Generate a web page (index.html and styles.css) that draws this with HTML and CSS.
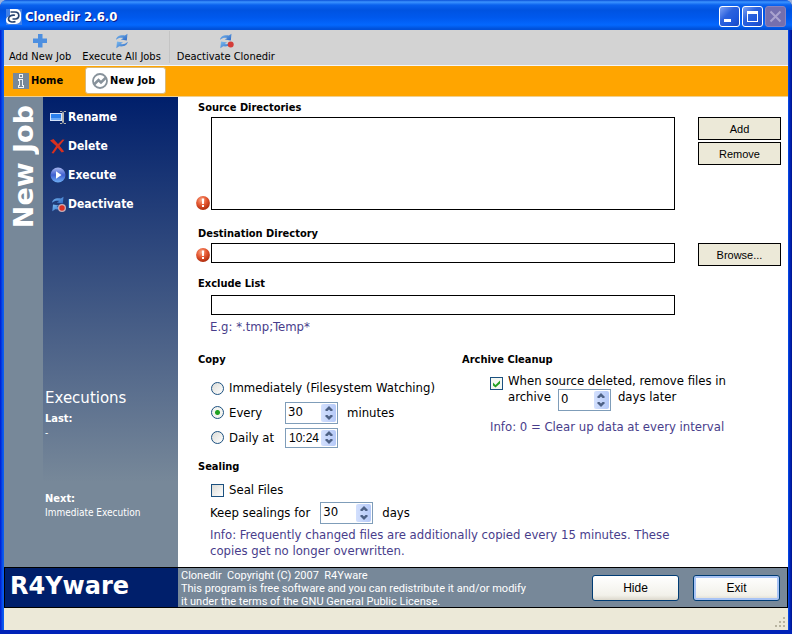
FILE: index.html
```html
<!DOCTYPE html>
<html lang="en">
<head>
<meta charset="utf-8">
<title>Clonedir 2.6.0</title>
<link rel="stylesheet" href="styles.css">
</head>
<body>
<svg class="defs" width="0" height="0" aria-hidden="true">
  <defs>
    <radialGradient id="red" cx="40%" cy="30%" r="70%"><stop offset="0" stop-color="#f8a888"/><stop offset=".5" stop-color="#e65a34"/><stop offset="1" stop-color="#b02c0c"/></radialGradient>
    <linearGradient id="ball" x1="0" y1="0" x2="0" y2="1"><stop offset="0" stop-color="#a9b8f0"/><stop offset=".5" stop-color="#3f5fd0"/><stop offset="1" stop-color="#6fb0f5"/></linearGradient>
    <linearGradient id="arrow" x1="0" y1="0" x2="1" y2="1"><stop offset="0" stop-color="#7dbcf0"/><stop offset="1" stop-color="#2a66c4"/></linearGradient>
    <symbol id="sync" viewBox="0 0 16 16">
      <path fill="url(#arrow)" d="M2 6.800C2.500 3.800 5 1.800 10.800 2.500L13.500.7 12.800 7.500 6.800 6.600 9.300 4.900C6.500 4.400 4.200 4.800 2 6.800z"/>
      <path fill="url(#arrow)" d="M13.800 8.700C13.300 11.700 10.800 13.900 5.200 13.300L2.300 15.200 3 8.500 9 9.400 6.500 11.100C9.300 11.600 11.600 10.700 13.800 8.700z"/>
    </symbol>
    <symbol id="error" viewBox="0 0 14 14">
      <circle cx="7" cy="7" r="6.900" fill="url(#red)"/>
      <path fill="#fff" d="M5.800 2.500h2.400l-.3 5.500H6.100zM6 9h2v2H6z"/>
    </symbol>
    <symbol id="up" viewBox="0 0 8 5"><path fill="#4d6185" d="M4 0l4 4-1 1H5.500L4 3.500 2.500 5H1L0 4z"/></symbol>
    <symbol id="down" viewBox="0 0 8 5"><path fill="#4d6185" d="M4 5l4-4-1-1H5.500L4 1.500 2.500 0H1L0 1z"/></symbol>
  </defs>
</svg>
<div class="window">
  <header class="titlebar">
    <svg class="logo" width="16" height="16" viewBox="0 0 16 16">
      <rect width="16" height="16" fill="#3f7fe8"/>
      <path d="M4 0h6a5 5 0 0 1 5 5v5a5 5 0 0 1-5 5H4a4 4 0 0 1-4-4c0-2 1-3 4-4z" fill="#fff"/>
      <path d="M4.500 3H9c5 0 5 7 .5 7H6.500M9 6.300C6 5.500 2.500 7 2.500 10c0 3 4 3.500 7 2.500" fill="none" stroke="#27436f" stroke-width="1.700"/>
    </svg>
    <h1>Clonedir 2.6.0</h1>
    <div class="wincontrols">
      <button type="button" aria-label="Minimize"><svg width="19" height="19" viewBox="0 0 19 19"><path fill="#fff" d="M4 12h7v3H4z"/></svg></button>
      <button type="button" aria-label="Maximize"><svg width="19" height="19" viewBox="0 0 19 19"><path fill="#fff" fill-rule="evenodd" d="M4 4h11v11H4zM5 7v7h9V7z"/></svg></button>
      <button type="button" class="close" aria-label="Close" disabled><svg width="19" height="19" viewBox="0 0 19 19"><path stroke="#aaa3cf" stroke-width="2" d="M4.500 4.500l10 10M14.500 4.500l-10 10"/></svg></button>
    </div>
  </header>

  <div class="toolbar">
    <button type="button"><svg width="16" height="16" viewBox="0 0 16 16"><path fill="#4d8fe0" d="M6 1h4.500v4.500H15V10h-4.500v4.500H6V10H1V5.500h5z"/></svg>Add New Job</button>
    <button type="button"><svg width="16" height="16"><use href="#sync"/></svg>Execute All Jobs</button>
    <span class="divider"></span>
    <button type="button"><svg width="16" height="16" viewBox="0 0 16 16"><use href="#sync"/><circle cx="12.700" cy="11.500" r="3" fill="#d43c38"/></svg>Deactivate Clonedir</button>
  </div>

  <nav class="tabs">
    <a href="#home"><svg width="16" height="16" viewBox="0 0 16 16"><path fill="#778899" d="M0 0h16v16H0z"/><path fill="#f2f4f6" fill-rule="evenodd" d="M6 1h4v4H6zM7 2v2h2V2zM5 6h5v6h1v3H5v-3h1V8H5zM7 7v6H6v1h4v-1H9V7z"/></svg>Home</a>
    <a href="#job" class="current"><svg width="16" height="16" viewBox="0 0 16 16"><circle cx="8" cy="8" r="7" fill="#fff" stroke="#87929b" stroke-width="1.800"/><path d="M2 11.500L6.500 7l2.500 2.500L14 4.500" fill="none" stroke="#87929b" stroke-width="2.600"/></svg>New Job</a>
  </nav>

  <div class="content">
    <aside class="strip"><h2>New Job</h2></aside>
    <aside class="panel">
      <div class="actions">
        <button type="button"><svg width="16" height="16" viewBox="0 0 16 16"><path fill="#d5e3fa" d="M0 4h12v8H0z"/><path fill="#2a80ee" d="M1 5h10v6H1z"/><path fill="#68a8f8" d="M1 9h10v2H1z"/><path fill="none" stroke="#b4b4ae" d="M10 2.500h2l1 1 1-1h2M10 14.500h2l1-1 1 1h2"/><path stroke="#b4b4ae" stroke-width="2" d="M13 3.500v10"/></svg>Rename</button>
        <button type="button"><svg width="16" height="16" viewBox="0 0 16 16"><path fill="#d8301f" d="M0 2.500L3.500 1 8 6l4.500-4.500 2 .3L9.500 7.800l4.700 5.700-2.500 1L7.700 9.800 3.500 15.500 1.500 15l4.700-7z"/></svg>Delete</button>
        <button type="button"><svg width="16" height="16" viewBox="0 0 16 16"><circle cx="8" cy="8" r="7.500" fill="url(#ball)"/><path fill="#fff" d="M6 4.200L11.500 8 6 11.800z"/></svg>Execute</button>
        <button type="button"><svg width="16" height="16" viewBox="0 0 16 16"><use href="#sync"/><circle cx="12" cy="12" r="4" fill="#c9aeb8"/><circle cx="12" cy="12" r="2.700" fill="#dc3024"/></svg>Deactivate</button>
      </div>
      <div class="executions">
        <h2>Executions</h2>
        <dl>
          <dt>Last:</dt><dd>-</dd>
          <dt>Next:</dt><dd>Immediate Execution</dd>
        </dl>
      </div>
    </aside>

    <main class="form">
      <section class="field">
        <label class="heading" for="source">Source Directories</label>
        <div class="row">
          <svg class="error" width="14" height="14"><use href="#error"/></svg>
          <textarea id="source"></textarea>
          <div class="side"><button type="button">Add</button><button type="button">Remove</button></div>
        </div>
      </section>
      <section class="field destination">
        <label class="heading" for="dest">Destination Directory</label>
        <div class="row">
          <svg class="error" width="14" height="14"><use href="#error"/></svg>
          <input type="text" id="dest">
          <div class="side"><button type="button">Browse...</button></div>
        </div>
      </section>
      <section class="field exclude">
        <label class="heading" for="exclude">Exclude List</label>
        <div class="row"><input type="text" id="exclude"></div>
        <p class="hint">E.g: *.tmp;Temp*</p>
      </section>

      <div class="pair">
        <section class="group">
          <h3 class="heading">Copy</h3>
          <div class="options">
            <div class="option"><input type="radio" name="copy" id="now"><label for="now">Immediately (Filesystem Watching)</label></div>
            <div class="option"><input type="radio" name="copy" id="every" checked><label for="every" class="short">Every</label>
              <span class="spin"><input type="text" value="30" aria-label="Minutes"><span class="arrows"><button type="button" aria-label="Up"><svg width="8" height="5"><use href="#up"/></svg></button><button type="button" aria-label="Down"><svg width="8" height="5"><use href="#down"/></svg></button></span></span>
              <span class="unit">minutes</span></div>
            <div class="option"><input type="radio" name="copy" id="daily"><label for="daily" class="short">Daily at</label>
              <span class="spin time"><input type="text" value="10:24" aria-label="Time"><span class="arrows"><button type="button" aria-label="Up"><svg width="8" height="5"><use href="#up"/></svg></button><button type="button" aria-label="Down"><svg width="8" height="5"><use href="#down"/></svg></button></span></span></div>
          </div>
        </section>
        <section class="group">
          <h3 class="heading">Archive Cleanup</h3>
          <div class="cleanup">
            <input type="checkbox" id="clean" checked>
            <div>
              <label for="clean">When source deleted, remove files in</label>
              <div class="inline"><label for="keep">archive</label>
                <span class="spin"><input type="text" id="keep" value="0"><span class="arrows"><button type="button" aria-label="Up"><svg width="8" height="5"><use href="#up"/></svg></button><button type="button" aria-label="Down"><svg width="8" height="5"><use href="#down"/></svg></button></span></span>
                <span>days later</span></div>
            </div>
          </div>
          <p class="info">Info: 0 = Clear up data at every interval</p>
        </section>
      </div>

      <section class="sealing">
        <h3 class="heading">Sealing</h3>
        <div class="option"><input type="checkbox" id="seal"><label for="seal">Seal Files</label></div>
        <div class="option keep"><label for="sealdays">Keep sealings for</label>
          <span class="spin"><input type="text" id="sealdays" value="30"><span class="arrows"><button type="button" aria-label="Up"><svg width="8" height="5"><use href="#up"/></svg></button><button type="button" aria-label="Down"><svg width="8" height="5"><use href="#down"/></svg></button></span></span>
          <span class="unit">days</span></div>
        <p class="info">Info: Frequently changed files are additionally copied every 15 minutes. These copies get no longer overwritten.</p>
      </section>
    </main>
  </div>

  <footer class="footer">
    <div class="brand">R4Yware</div>
    <p>Clonedir&nbsp; Copyright (C) 2007&nbsp; R4Yware<br>This program is free software and you can redistribute it and/or modify<br>it under the terms of the GNU General Public License.</p>
    <div class="buttons"><button type="button">Hide</button><button type="button" class="default">Exit</button></div>
  </footer>
  <div class="status"><svg width="12" height="12" viewBox="0 0 12 12"><path fill="#b8b4a0" d="M9 1h2v2H9zM9 5h2v2H9zM5 5h2v2H5zM9 9h2v2H9zM5 9h2v2H5zM1 9h2v2H1z"/></svg></div>
</div>
</body>
</html>
```
FILE: styles.css
```css
* { box-sizing: border-box; }
body {
  margin: 0;
  background: #9db3dc;
  font: 13px/16px "DejaVu Sans Condensed", "DejaVu Sans", sans-serif;
  color: #000;
}
h1, h2, h3, p, dl, dd { margin: 0; }
button, input, textarea { font: inherit; color: inherit; margin: 0; padding: 0; }
button { border: 0; background: none; }
svg { display: block; flex: none; }
.defs { position: absolute; }

.window {
  display: flex;
  flex-direction: column;
  min-height: 100vh;
  padding: 0 4px 4px;
  border-radius: 7px 7px 0 0;
  background: linear-gradient(90deg, #0019cf, #0a5cf0 3px, #0a5cf0 calc(100% - 4px), #0030d0 calc(100% - 3px), #00138c);
  box-shadow: inset 0 -4px #0022b8;
}

.titlebar {
  display: flex;
  align-items: center;
  height: 30px;
  margin: 0 -4px;
  padding: 3px 6px 0 6px;
  border-radius: 7px 7px 0 0;
  background: linear-gradient(#0a50d8, #3c94ff 2px, #0a62ee 5px, #0053e1 10px, #0059ee 18px, #0468fe 25px, #0050d8 29px);
}
.titlebar h1 {
  flex: 1;
  margin-left: 3px;
  color: #fff;
  font-size: 13px;
  line-height: 16px;
  text-shadow: 1px 1px #0a1883;
}
.wincontrols { display: flex; gap: 2px; }
.wincontrols button {
  width: 21px;
  height: 21px;
  border: 1px solid #fff;
  border-radius: 3px;
  background: linear-gradient(135deg, #7fa3f5, #2c62dd 40%, #1f58dc 70%, #1b48c0);
}
.wincontrols .close { border-color: #8a83bd; background: #756fae; }

.toolbar {
  display: flex;
  align-items: flex-start;
  height: 36px;
  padding: 3px 0 0 5px;
  border-bottom: 1px solid #f6f6f6;
  background: #d3d3d3;
  font-size: 11px;
  line-height: 14px;
}
.toolbar button {
  display: flex;
  flex-direction: column;
  align-items: center;
  gap: 1px;
  margin-right: 11px;
}
.toolbar .divider { width: 1px; height: 32px; margin: -2px 7px 0 -3px; background: #c4c4c4; }

.tabs {
  display: flex;
  gap: 14px;
  height: 31px;
  padding: 1px 0 2px 1px;
  border-bottom: 1px solid #f0d090;
  background: #ffa500;
  font-size: 11px;
  font-weight: bold;
}
.tabs a {
  display: flex;
  align-items: center;
  gap: 2px;
  padding: 0 8px;
  color: #000;
  text-decoration: none;
}
.tabs .current { padding: 0 10px 0 6px; border: 1px solid #d9b878; border-radius: 3px; background: #fff; }

.content { display: flex; flex: 1; background: #fff; }
.strip { width: 39px; padding-top: 8px; background: #778899; color: #fff; }
.strip h2 {
  width: 39px;
  writing-mode: vertical-rl;
  transform: rotate(180deg);
  font-family: "DejaVu Sans", sans-serif;
  font-size: 27px;
  line-height: 39px;
}
.panel {
  display: flex;
  flex-direction: column;
  justify-content: space-between;
  width: 135px;
  padding: 12px 2px 47px;
  background: linear-gradient(#001f6b, #778899 82%);
  color: #fff;
}
.actions { display: flex; flex-direction: column; align-items: flex-start; gap: 13px; padding-left: 5px; }
.actions button { display: flex; align-items: center; gap: 2px; font-size: 12px; font-weight: bold; }
.executions h2 { margin-bottom: 5px; font-family: "DejaVu Sans", sans-serif; font-size: 15px; font-weight: normal; line-height: 18px; }
.executions dl { font-size: 10px; line-height: 14px; }
.executions dt { font-size: 11px; font-weight: bold; }
.executions dd + dt { margin-top: 52px; }

.form { flex: 1; padding: 3px 7px 8px 18px; }
.heading { display: block; margin: 0; padding-left: 2px; font-size: 11px; font-weight: bold; line-height: 16px; }
.row { display: grid; grid-template-columns: 15px 1fr 106px; margin-top: 1px; }
.row textarea, .row > input { grid-column: 2; border: 1px solid #000; background: #fff; width: 100%; }
.row textarea { display: block; height: 93px; resize: none; }
.row > input { height: 20px; }
.error { align-self: end; }
.destination .error { align-self: center; }
.side { display: flex; flex-direction: column; gap: 2px; padding-left: 23px; }
.side button {
  height: 23px;
  border: 1px solid #000;
  background: #ece9d8;
  font: 11px "Liberation Sans", Arial, sans-serif;
}
.field { margin-bottom: 16px; }
.field + .field { margin-bottom: 10px; }
.field.exclude { margin-bottom: 17px; }
.exclude .row { margin-top: 3px; }
.hint { margin: 4px 0 0 14px; color: #483d8b; }
.info { color: #483d8b; }

.pair { display: grid; grid-template-columns: 264px 1fr; }
.options { display: grid; grid-template-rows: 24px 25px 25px; margin-top: 8px; padding-left: 15px; }
.option { display: flex; align-items: center; }
.option > label:not(:first-child) { margin-left: 5px; }
.option .short { width: 56px; }
.unit { margin-left: 9px; }

input[type="radio"], input[type="checkbox"] {
  appearance: none;
  flex: none;
  width: 13px;
  height: 13px;
  border: 1px solid #1c5180;
  background: linear-gradient(135deg, #dcdcd7, #fff);
}
input[type="radio"] { border-radius: 50%; }
input[type="radio"]:checked { background: radial-gradient(circle, #21a121 2px, #f4f4f0 3px); }
input[type="checkbox"]:checked {
  background: #f4f8f2 url("data:image/svg+xml,%3Csvg xmlns='http://www.w3.org/2000/svg' viewBox='0 0 11 11'%3E%3Cpath d='M2 4.500l2.500 2.500L9 2.500v3L4.500 9.500 2 7.500z' fill='%2321a121'/%3E%3C/svg%3E");
}

.spin { display: flex; flex: none; width: 53px; height: 22px; padding: 1px; border: 1px solid #7f9db9; background: #fff; }
.spin input { flex: 1; min-width: 0; height: 16px; padding-left: 1px; border: 0; outline: 0; background: none; }
.spin.time { height: 20px; }
.spin.time input { padding-left: 2px; font: 12px/16px "Liberation Sans", Arial, sans-serif; }
.arrows { display: flex; flex-direction: column; width: 15px; border-radius: 2px; background: linear-gradient(90deg, #d3e0fd, #b5c9f8); }
.arrows button { display: flex; flex: 1; align-items: center; justify-content: center; min-height: 0; }

.cleanup { display: flex; gap: 5px; margin-top: 5px; padding-left: 30px; }
.cleanup > input { margin-top: 4px; }
.cleanup > div > label { display: block; }
.inline { display: flex; gap: 7px; height: 22px; }
.group .info { margin-top: 8px; padding-left: 30px; }

.sealing { margin-top: 9px; }
.sealing .option { min-height: 22px; margin-top: 4px; padding-left: 15px; }
.sealing .keep { margin-top: 1px; padding-left: 14px; }
.keep .spin { margin-left: 10px; }
.sealing .info { max-width: 480px; margin-top: 3px; padding-left: 14px; }

.footer { display: flex; height: 41px; border: 1px solid #000; background: #778899; color: #fff; }
.brand {
  width: 173px;
  padding-left: 5px;
  background: #001f6b;
  font: bold 24px/36px "DejaVu Sans", sans-serif;
}
.footer p { flex: 1; padding: 1px 0 0 3px; font: 11px/13px Roboto, "Liberation Sans", sans-serif; white-space: nowrap; }
.buttons { display: flex; align-items: center; gap: 14px; padding-right: 7px; }
.buttons button {
  width: 87px;
  height: 26px;
  border: 1px solid #003c74;
  border-radius: 3px;
  background: linear-gradient(#fff, #f2f1ea 80%, #dcd8cc);
  color: #000;
  font: 12px "Liberation Sans", Arial, sans-serif;
}
.buttons .default { box-shadow: inset 0 0 0 2px #a9c4f5; }
.status { display: flex; align-items: flex-end; justify-content: flex-end; height: 22px; padding: 2px; background: #ece9d8; }
```
